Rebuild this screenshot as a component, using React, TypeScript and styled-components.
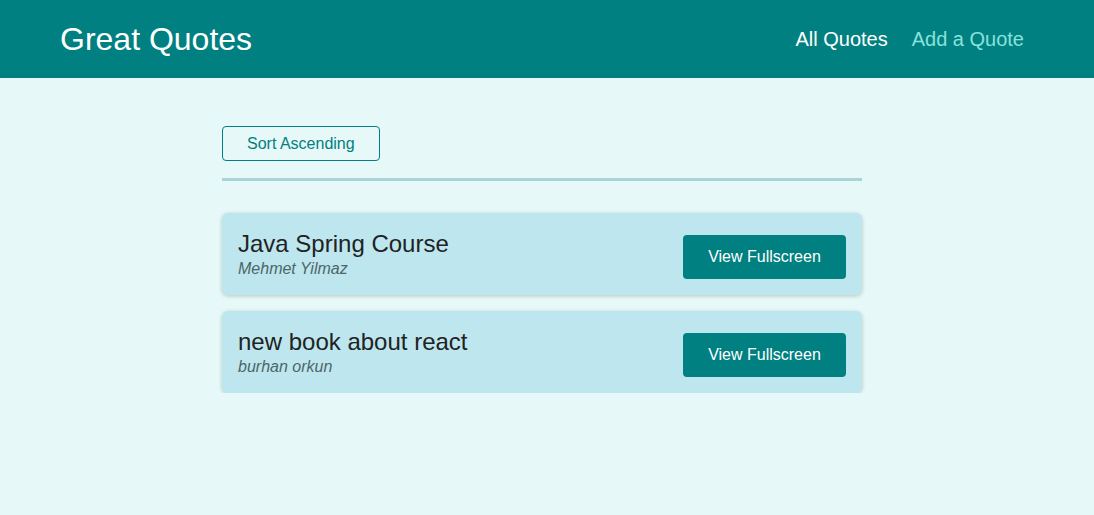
import styled, { createGlobalStyle } from "styled-components";

const GlobalStyle = createGlobalStyle`
    body {
        margin: 0;
        background: #e6f8f7;
        font-family: "Liberation Sans", Arial, sans-serif;
    }
`;

const Header = styled.header`
    align-items: center;
    background: #008080;
    display: flex;
    height: 78px;
    justify-content: space-between;
    padding: 0 70px 0 60px;
`;

const Logo = styled.div`
    color: #ffffff;
    font-size: 32px;
`;

const Nav = styled.nav`
    display: flex;
    gap: 24px;
`;

const NavLink = styled.a<{ $active?: boolean }>`
    color: ${(p) => (p.$active ? "#88e2dc" : "#ffffff")};
    font-size: 20px;
    text-decoration: none;
`;

const Main = styled.main`
    margin-left: calc(50% - 325px);
    padding-top: 48px;
    width: 640px;
`;

const Sorting = styled.div`
    border-bottom: 3px solid #a7d5d5;
    padding-bottom: 17px;
    margin-bottom: 32px;
`;

const OutlineButton = styled.button`
    background: transparent;
    border: 1px solid #008080;
    border-radius: 4px;
    color: #008080;
    cursor: pointer;
    font: inherit;
    font-size: 16px;
    height: 35px;
    padding: 0 24px;
`;

const List = styled.ul`
    display: flex;
    flex-direction: column;
    gap: 16px;
    list-style: none;
    margin: 0;
    padding: 0;
`;

const Card = styled.li`
    align-items: center;
    background: #bde6ef;
    border-radius: 6px;
    box-shadow: 0 1px 4px rgba(0, 0, 0, 0.2);
    display: flex;
    height: 82px;
    justify-content: space-between;
    padding: 0 16px;
    box-sizing: border-box;
`;

const Quote = styled.figure`
    margin: 0;
`;

const QuoteText = styled.p`
    color: #222222;
    font-size: 24px;
    margin: 0;
`;

const Author = styled.figcaption`
    color: #4d6666;
    font-size: 16px;
    font-style: italic;
    margin-top: 2px;
`;

const FullButton = styled.a`
    align-items: center;
    background: #008080;
    border-radius: 4px;
    color: #ffffff;
    display: flex;
    font-size: 16px;
    height: 44px;
    justify-content: center;
    margin-top: 6px;
    text-decoration: none;
    width: 163px;
`;

const quotes = [
    { id: "q1", text: "Java Spring Course", author: "Mehmet Yilmaz" },
    { id: "q2", text: "new book about react", author: "burhan orkun" },
];

function App() {
    return (
        <>
            <GlobalStyle />
            <Header>
                <Logo>Great Quotes</Logo>
                <Nav>
                    <NavLink href="#">All Quotes</NavLink>
                    <NavLink href="#" $active>Add a Quote</NavLink>
                </Nav>
            </Header>
            <Main>
                <Sorting>
                    <OutlineButton>Sort Ascending</OutlineButton>
                </Sorting>
                <List>
                    {quotes.map((q) => (
                        <Card key={q.id}>
                            <Quote>
                                <QuoteText>{q.text}</QuoteText>
                                <Author>{q.author}</Author>
                            </Quote>
                            <FullButton href="#">View Fullscreen</FullButton>
                        </Card>
                    ))}
                </List>
            </Main>
        </>
    );
}

export default App;
